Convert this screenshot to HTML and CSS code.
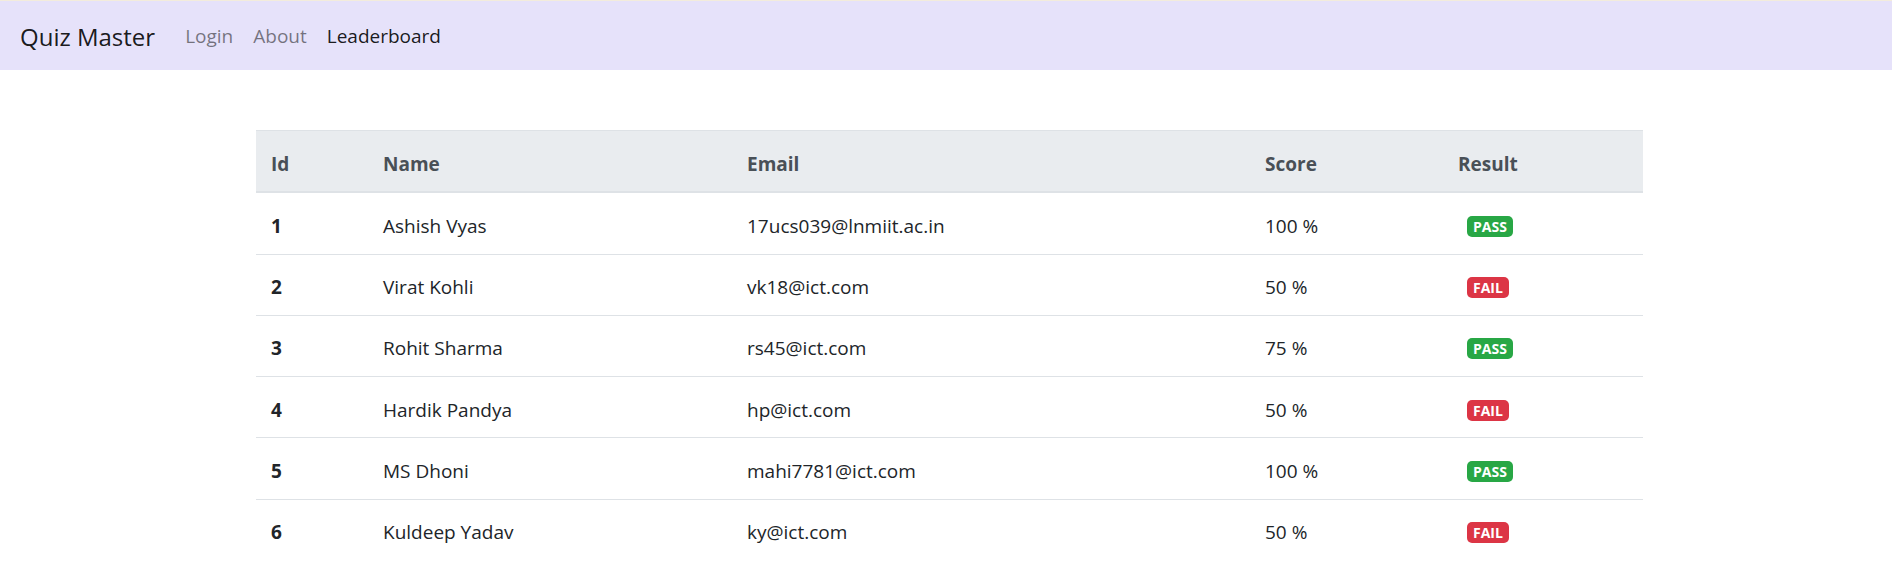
FILE: index.html
```html
<!DOCTYPE html>
<html lang="en">
<head>
<meta charset="utf-8">
<title>Quiz Master - Leaderboard</title>
<link rel="stylesheet" href="styles.css">
</head>
<body>
<nav class="navbar">
  <a class="brand" href="#">Quiz Master</a>
  <ul class="nav">
    <li><a class="nav-link" href="#">Login</a></li>
    <li><a class="nav-link" href="#">About</a></li>
    <li><a class="nav-link active" href="#">Leaderboard</a></li>
  </ul>
</nav>
<main class="container">
  <table class="board">
    <colgroup>
      <col class="c-id"><col class="c-name"><col class="c-email"><col class="c-score"><col class="c-result">
    </colgroup>
    <thead>
      <tr><th>Id</th><th>Name</th><th>Email</th><th>Score</th><th>Result</th></tr>
    </thead>
    <tbody>
      <tr><th>1</th><td>Ashish Vyas</td><td>17ucs039@lnmiit.ac.in</td><td>100 %</td><td><span class="badge pass">PASS</span></td></tr>
      <tr><th>2</th><td>Virat Kohli</td><td>vk18@ict.com</td><td>50 %</td><td><span class="badge fail">FAIL</span></td></tr>
      <tr><th>3</th><td>Rohit Sharma</td><td>rs45@ict.com</td><td>75 %</td><td><span class="badge pass">PASS</span></td></tr>
      <tr><th>4</th><td>Hardik Pandya</td><td>hp@ict.com</td><td>50 %</td><td><span class="badge fail">FAIL</span></td></tr>
      <tr><th>5</th><td>MS Dhoni</td><td>mahi7781@ict.com</td><td>100 %</td><td><span class="badge pass">PASS</span></td></tr>
      <tr><th>6</th><td>Kuldeep Yadav</td><td>ky@ict.com</td><td>50 %</td><td><span class="badge fail">FAIL</span></td></tr>
    </tbody>
  </table>
</main>
</body>
</html>
```
FILE: styles.css
```css
* { box-sizing: border-box; }
html, body { margin: 0; padding: 0; }
body {
  font-family: "Open Sans", "Noto Sans", sans-serif;
  font-size: 19px;
  line-height: 30px;
  color: #212529;
  background: #fff;
}
a { text-decoration: none; }

.navbar {
  display: flex;
  align-items: center;
  height: 70px;
  padding: 1px 20px 0;
  background: #e6e2fa;
  border-top: 1px solid #f3ecdc;
}
.brand {
  font-size: 24px;
  line-height: 37px;
  color: rgba(0,0,0,.9);
  margin-right: 20px;
}
.nav {
  display: flex;
  list-style: none;
  margin: 0;
  padding: 0;
}
.nav-link {
  display: block;
  padding: 10px 10px;
  color: rgba(0,0,0,.5);
}
.nav-link.active { color: rgba(0,0,0,.9); }

.container {
  width: 1387px;
  margin: 60px auto 0;
  padding-left: 7px;
  box-sizing: content-box;
}
.board {
  width: 1387px;
  border-collapse: collapse;
  table-layout: fixed;
}
.c-id { width: 112px; }
.c-name { width: 364px; }
.c-email { width: 518px; }
.c-score { width: 193px; }
.c-result { width: 200px; }

.board th, .board td {
  padding: 17.5px 15px 12.75px;
  text-align: left;
  vertical-align: top;
  border-top: 1px solid #dee2e6;
}
.board thead th {
  background: #e9ecef;
  color: #495057;
  font-weight: 700;
  border-bottom: 2px solid #dee2e6;
}
.board tbody th { font-weight: 700; }
.board td { font-weight: 400; }

.badge {
  display: inline-block;
  margin-left: 9px;
  padding: 3px 6px;
  font-size: 14px;
  line-height: 15px;
  font-weight: 700;
  color: #fff;
  border-radius: 5px;
  vertical-align: 1px;
}
.badge.pass { background: #28a745; }
.badge.fail { background: #dc3545; }
```
